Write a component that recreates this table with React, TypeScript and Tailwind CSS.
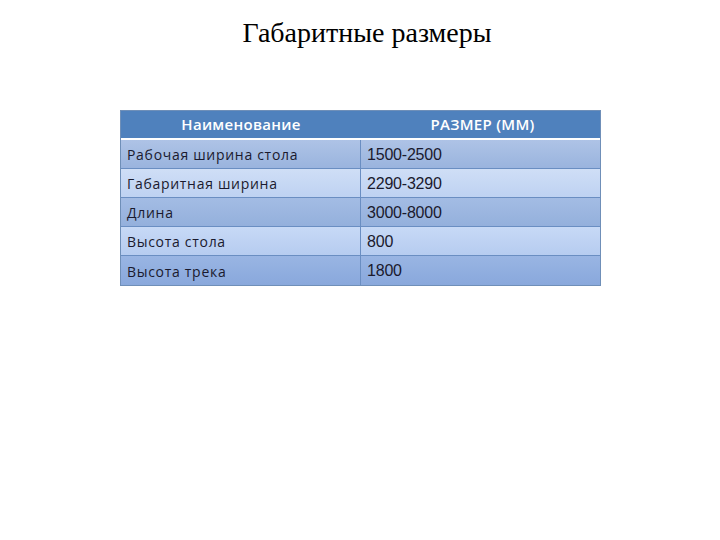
const rows = [
  ['Рабочая ширина стола', '1500-2500'],
  ['Габаритная ширина', '2290-3290'],
  ['Длина', '3000-8000'],
  ['Высота стола', '800'],
  ['Высота трека', '1800'],
];

const rowBg = [
  'bg-gradient-to-b from-[#aec3e6] to-[#9ab4de]',
  'bg-gradient-to-b from-[#cfdef6] to-[#bed2f2]',
  'bg-gradient-to-b from-[#a3bce4] to-[#94b0dc]',
  'bg-gradient-to-b from-[#c7d9f6] to-[#b6ccf0]',
  'bg-gradient-to-b from-[#99b5e3] to-[#89a8dc]',
];

export default function App() {
  return (
    <div className="w-[720px] h-[540px] bg-white relative">
      <h1 className="pt-[16px] pl-[14px] text-center text-[28px] leading-[34px] text-black font-['Liberation_Serif',serif]">
        Габаритные размеры
      </h1>
      <div className="mt-[60px] ml-[120px] w-[481px] border border-[#6f8fb8] font-['Open_Sans','Liberation_Sans',sans-serif]">
        <div className="flex h-[29px] bg-[#4f81bd] border-b-2 border-white text-white font-semibold text-[15px] items-center tracking-[0.3px]">
          <div className="w-[240px] text-center">Наименование</div>
          <div className="flex-1 text-center pl-[4px]">РАЗМЕР (ММ)</div>
        </div>
        {rows.map((r, i) => (
          <div
            key={i}
            className={`flex h-[29px] text-[14px] text-[#1a1a2e] ${rowBg[i]} ${i < rows.length - 1 ? 'border-b border-[#6a8ec2]' : ''}`}
          >
            <div className="w-[240px] pl-[6px] pt-[1px] flex items-center border-r border-[#6a8ec2] tracking-[0.7px]">{r[0]}</div>
            <div className="flex-1 pl-[6px] pt-[1px] flex items-center text-[16px] font-['Liberation_Sans',sans-serif] tracking-[-0.2px]">{r[1]}</div>
          </div>
        ))}
      </div>
    </div>
  );
}
